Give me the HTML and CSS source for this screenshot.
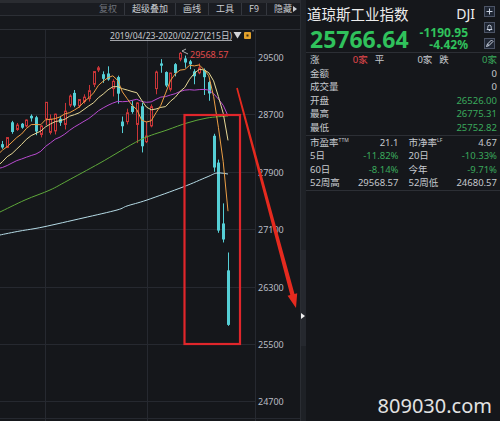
FILE: index.html
```html
<!DOCTYPE html>
<html lang="zh-CN">

<head>
    <meta charset="UTF-8" />
    <meta name="viewport" content="width=device-width, initial-scale=1.0" />
    <link rel="stylesheet" href="styles.css">
    <title>道琼斯工业指数 DJI</title>
</head>

<body>
    <div class="app">
        <section class="chart-pane">
            <div class="toolbar">
                <span class="tool dim">复权</span>
                <span class="tool">超级叠加</span>
                <span class="tool">画线</span>
                <span class="tool">工具</span>
                <span class="tool">F9</span>
                <span class="tool last">隐藏<i class="caret"></i></span>
            </div>
            <div class="subbar"></div>
            <div class="chart">
                <svg id="kline" width="300" height="391" viewBox="0 30 300 391">
                    <g id="grid" class="grid"></g>
                    <g id="axis" class="axis"></g>
                    <g class="range">
                        <text x="110" y="38.5" textLength="122" lengthAdjust="spacingAndGlyphs">2019/04/23-2020/02/27(215日)</text>
                        <line x1="110" y1="40.5" x2="232" y2="40.5" />
                        <polygon points="233.5,32 241.5,32 237.5,38.5" />
                        <rect class="lock" x="244" y="32" width="7" height="7" rx="1" />
                        <rect class="lock-hole" x="246.5" y="34.5" width="2" height="2" />
                        <path class="lock-tag" d="M251 29.5 h2 v2" />
                    </g>
                    <g id="candles"></g>
                    <g id="lines"></g>
                    <g class="peak">
                        <path d="M182 51 l4 -2 M182 51 l6 3" />
                        <text x="190" y="57.5">29568.57</text>
                    </g>
                    <rect class="mark-box" x="184.5" y="115" width="55.5" height="229" />
                    <polygon class="mark-arrow" points="237.8,87.8 294.5,293.9 297.2,293.2 296,308 287.6,295.8 290.3,295.1 236.2,88.2" />
                </svg>
            </div>
        </section>

        <div class="splitter">
            <div class="thumb"><i class="grip"></i></div>
        </div>

        <aside class="quote">
            <div class="qhead">
                <div class="name-block">
                    <div class="title">道琼斯工业指数</div>
                    <div class="price">25766.64</div>
                </div>
                <div class="code-block">
                    <div class="dji">DJI</div>
                    <div class="chg first">-1190.95</div>
                    <div class="chg">-4.42%</div>
                </div>
                <div class="tools">
                    <span class="tbtn">
                        <svg width="9" height="9" viewBox="0 0 9 9"><path d="M4.5 1.5v6M1.5 4.5h6" /></svg>
                    </span>
                    <span class="tbtn">
                        <svg width="9" height="9" viewBox="0 0 9 9"><path d="M2 6.5c0.8-0.8 0.8-1.6 0.8-2.6a1.7 1.7 0 0 1 3.4 0c0 1 0 1.8 0.8 2.6zM3.8 7.5h1.4" /></svg>
                    </span>
                    <span class="tbtn">
                        <svg width="9" height="9" viewBox="0 0 9 9"><path d="M1.5 7.5l1-2.5 4-4 1.5 1.5-4 4zM2.5 5l1.5 1.5" /></svg>
                    </span>
                </div>
            </div>

            <div class="stats">
                <div class="row three">
                    <div class="cell"><span>涨</span><span class="red">0家</span></div>
                    <div class="cell"><span>平</span><span>0家</span></div>
                    <div class="cell"><span>跌</span><span class="green">0家</span></div>
                </div>
                <div class="row"><div class="cell"><span>金额</span><span>0</span></div></div>
                <div class="row"><div class="cell"><span>成交量</span><span>0</span></div></div>
                <div class="row"><div class="cell"><span>开盘</span><span class="green">26526.00</span></div></div>
                <div class="row"><div class="cell"><span>最高</span><span class="green">26775.31</span></div></div>
                <div class="row"><div class="cell"><span>最低</span><span class="green">25752.82</span></div></div>
            </div>

            <div class="stats">
                <div class="row two">
                    <div class="cell"><span>市盈率<sup>TTM</sup></span><span>21.1</span></div>
                    <div class="cell"><span>市净率<sup>LF</sup></span><span>4.67</span></div>
                </div>
                <div class="row two">
                    <div class="cell"><span>5日</span><span class="green">-11.82%</span></div>
                    <div class="cell"><span>20日</span><span class="green">-10.33%</span></div>
                </div>
                <div class="row two">
                    <div class="cell"><span>60日</span><span class="green">-8.14%</span></div>
                    <div class="cell"><span>今年</span><span class="green">-9.71%</span></div>
                </div>
                <div class="row two">
                    <div class="cell"><span>52周高</span><span>29568.57</span></div>
                    <div class="cell"><span>52周低</span><span>24680.57</span></div>
                </div>
            </div>
        </aside>
    </div>

    <div class="watermark">809030.com</div>

    <script>
        var NS = "http://www.w3.org/2000/svg";

        // closes 2019/11/19 - 2019/12/17, only used for the moving averages
        var prior = [27934, 27821, 27766, 27876, 28066, 28121, 28164, 28051, 27783, 27502,
            27649, 27677, 28015, 27909, 27881, 27911, 28132, 28135, 28235, 28267];

        // open, high, low, close  2019/12/18 - 2020/02/27
        var bars = [
            [28285, 28330, 28220, 28239], [28240, 28380, 28230, 28377], [28590, 28610, 28430, 28455],
            [28490, 28580, 28470, 28551], [28570, 28580, 28500, 28515], [28540, 28630, 28520, 28621],
            [28680, 28700, 28600, 28645], [28660, 28680, 28410, 28462], [28420, 28550, 28380, 28538],
            [28640, 28872, 28550, 28868], [28450, 28700, 28420, 28634], [28470, 28710, 28420, 28703],
            [28640, 28680, 28540, 28583], [28560, 28860, 28490, 28745], [28830, 28980, 28800, 28956],
            [29000, 29040, 28800, 28823], [28820, 28910, 28790, 28907], [28880, 28980, 28850, 28940],
            [28920, 29110, 28880, 29030], [29120, 29300, 29080, 29297], [29320, 29374, 29290, 29348],
            [29260, 29300, 29140, 29196], [29270, 29370, 29170, 29186], [29060, 29190, 28950, 29160],
            [29220, 29240, 28850, 28989], [28600, 28670, 28440, 28535], [28600, 28780, 28560, 28722],
            [28820, 28890, 28710, 28734], [28560, 28870, 28300, 28859], [28813, 28860, 28170, 28256],
            [28320, 28600, 28300, 28399], [28540, 28840, 28520, 28807], [29060, 29310, 28980, 29290],
            [29410, 29470, 29280, 29379], [29290, 29300, 29080, 29102], [29050, 29280, 29020, 29276],
            [29400, 29415, 29230, 29276], [29470, 29568.57, 29440, 29551], [29480, 29520, 29350, 29423],
            [29440, 29460, 29330, 29398], [29300, 29330, 29120, 29232], [29280, 29410, 29260, 29348],
            [29320, 29340, 28970, 29219], [29150, 29170, 28890, 28992], [28402, 28430, 27900, 27960],
            [28028, 28070, 27050, 27081], [27180, 27460, 26915, 26957], [26526, 26775.31, 25752.82, 25766.64]
        ];

        // slow averages, read off the terminal
        var ma60 = [[0, 212], [25, 200], [50, 190], [67, 181], [100, 163], [140, 140], [167, 130], [187, 123], [207, 118], [228, 116]];
        var ma120 = [[0, 235], [20, 231], [43, 227], [83, 218], [117, 210], [127, 206], [147, 200], [183, 187], [207, 177], [217, 173], [228, 174]];

        function py(p) {
            return 57 + (29500 - p) * 57.4 / 800;
        }

        function px(i) {
            return 2.4 + i * 4.8;
        }

        function add(tag, attrs, parent) {
            var el = document.createElementNS(NS, tag);
            for (var k in attrs) el.setAttribute(k, attrs[k]);
            parent.appendChild(el);
            return el;
        }

        var grid = document.getElementById("grid");
        var axis = document.getElementById("axis");
        for (let p = 29500; p >= 24700; p -= 800) {
            var gy = Math.round(py(p)) + 0.5;
            add("line", { x1: 0, y1: gy, x2: 255, y2: gy }, grid);
            add("text", { x: 258, y: gy + 3.5 }, axis).textContent = p;
        }
        [45.5, 147.5, 255.5].forEach(function(gx) {
            add("line", { x1: gx, y1: 30, x2: gx, y2: 421 }, grid);
        });
        add("line", { x1: 0, y1: 418.5, x2: 300, y2: 418.5 }, grid);

        var candles = document.getElementById("candles");
        for (let i = 0; i < bars.length; i++) {
            let o = bars[i][0], h = bars[i][1], l = bars[i][2], c = bars[i][3];
            let cx = Math.round(px(i)) + 0.5;
            let bodyTop = py(Math.max(o, c));
            let bodyBot = py(Math.min(o, c));
            if (bodyBot - bodyTop < 1) bodyBot = bodyTop + 1;
            if (c >= o) {
                add("line", { x1: cx, y1: py(h), x2: cx, y2: bodyTop, class: "up" }, candles);
                add("line", { x1: cx, y1: bodyBot, x2: cx, y2: py(l), class: "up" }, candles);
                add("rect", { x: cx - 1, y: bodyTop, width: 2, height: bodyBot - bodyTop, class: "up" }, candles);
            } else {
                add("line", { x1: cx, y1: py(h), x2: cx, y2: py(l), class: "down" }, candles);
                add("rect", { x: cx - 1.5, y: bodyTop, width: 3, height: bodyBot - bodyTop, class: "down-body" }, candles);
            }
        }

        var lines = document.getElementById("lines");
        var closes = prior.concat(bars.map(function(b) { return b[3]; }));

        function movingAverage(n, cls) {
            var pts = [];
            for (let i = -1; i < bars.length; i++) {
                let k = i + prior.length;
                if (k - n + 1 < 0) continue;
                let s = 0;
                for (let j = k - n + 1; j <= k; j++) s += closes[j];
                pts.push(px(i).toFixed(1) + "," + py(s / n).toFixed(1));
            }
            add("polyline", { points: pts.join(" "), class: cls }, lines);
        }

        // catmull-rom through the read points
        function smooth(pts, cls) {
            var d = "M" + pts[0][0] + " " + pts[0][1];
            for (let i = 0; i < pts.length - 1; i++) {
                let a = pts[i - 1] || pts[i], b = pts[i], c = pts[i + 1], e = pts[i + 2] || c;
                d += " C" + (b[0] + (c[0] - a[0]) / 6).toFixed(1) + " " + (b[1] + (c[1] - a[1]) / 6).toFixed(1) +
                    " " + (c[0] - (e[0] - b[0]) / 6).toFixed(1) + " " + (c[1] - (e[1] - b[1]) / 6).toFixed(1) +
                    " " + c[0] + " " + c[1];
            }
            add("path", { d: d, class: cls }, lines);
        }

        smooth(ma120, "ma ma120");
        smooth(ma60, "ma ma60");
        movingAverage(20, "ma ma20");
        movingAverage(10, "ma ma10");
        movingAverage(5, "ma ma5");
    </script>
</body>

</html>
```

FILE: styles.css
```css
* {
    margin: 0;
    padding: 0;
    box-sizing: border-box;
}

body {
    width: 500px;
    height: 421px;
    overflow: hidden;
    position: relative;
    background-color: #15171b;
    color: #c8cbd0;
    font-family: "Noto Sans", "Noto Sans CJK SC", sans-serif;
}

.app {
    display: flex;
    height: 421px;
}

/* left: k-line chart */

.chart-pane {
    width: 300px;
    display: flex;
    flex-direction: column;
}

.toolbar {
    height: 16px;
    display: flex;
    justify-content: flex-end;
    border-top: 3px solid #2a2c31;
    border-bottom: 1px solid #2c2f35;
    background-color: #1a1c21;
    font-family: "Noto Sans CJK SC", sans-serif;
    font-size: 9px;
    line-height: 12px;
    color: #c9ccd1;
}

.tool {
    padding: 0 7px;
    border-left: 1px solid #34373e;
}

.tool.dim {
    color: #6f737b;
    border-left: none;
}

.tool.last {
    padding-right: 3px;
}

.caret {
    display: inline-block;
    margin-left: 1px;
    border-left: 4px solid #c9ccd1;
    border-top: 3px solid transparent;
    border-bottom: 3px solid transparent;
}

.subbar {
    height: 14px;
    border-bottom: 1px solid #2c2f35;
    background-color: #16181c;
}

.chart {
    flex: 1;
}

.chart svg {
    display: block;
}

.grid line {
    stroke: #262930;
    stroke-width: 1;
}

.axis text {
    font-family: "Noto Sans", sans-serif;
    font-size: 9px;
    fill: #b9bcc3;
}

.range text {
    font-family: "Noto Sans", "Noto Sans CJK SC", sans-serif;
    font-size: 9.5px;
    fill: #c6c9ce;
}

.range line {
    stroke: #c6c9ce;
    stroke-width: 0.8;
}

.range polygon {
    fill: #d2d4d8;
}

.range .lock {
    fill: #e2a12b;
}

.range .lock-hole {
    fill: #3a2a10;
}

.range .lock-tag {
    fill: none;
    stroke: #d8d8d8;
    stroke-width: 0.8;
}

.up {
    fill: none;
    stroke: #c93538;
    stroke-width: 1;
}

.down {
    stroke: #55cfd6;
    stroke-width: 1;
}

.down-body {
    fill: #55cfd6;
}

.ma {
    fill: none;
    stroke-width: 1;
}

.ma5 {
    stroke: #ee9f45;
}

.ma10 {
    stroke: #e7d896;
}

.ma20 {
    stroke: #b84bd0;
}

.ma60 {
    stroke: #5ea83a;
}

.ma120 {
    stroke: #b5dbe6;
}

.peak path {
    fill: none;
    stroke: #d8d8d8;
    stroke-width: 0.8;
}

.peak text {
    font-family: "Noto Sans", sans-serif;
    font-size: 9px;
    fill: #e24a4a;
}

.mark-box {
    fill: none;
    stroke: #e0262b;
    stroke-width: 2.2;
}

.mark-arrow {
    fill: #e52a1f;
}

/* splitter between chart and quote */

.splitter {
    width: 6px;
    background-color: #1e2126;
    border-left: 1px solid #2a2d33;
}

.thumb {
    margin-top: 250px;
    height: 96px;
    padding-top: 63px;
    background-color: #25282e;
}

.grip {
    display: block;
    width: 0;
    border-left: 4px solid #f0f0f0;
    border-top: 3px solid transparent;
    border-bottom: 3px solid transparent;
}

/* right: quote panel */

.quote {
    flex: 1;
}

.qhead {
    height: 53px;
    display: flex;
    padding: 0 3px 0 4px;
    border-bottom: 1px solid #2c2f35;
}

.title {
    margin-top: 6px;
    margin-left: -3px;
    font-family: "Noto Sans CJK SC", sans-serif;
    font-size: 14.5px;
    line-height: 16px;
    color: #ececec;
}

.price {
    margin-top: 5px;
    font-size: 23px;
    font-weight: bold;
    line-height: 24px;
    color: #30c25c;
}

.code-block {
    flex: 1;
    padding-top: 6px;
    text-align: right;
}

.dji {
    font-size: 14px;
    line-height: 16px;
    color: #ececec;
}

.chg {
    padding-right: 7px;
    font-size: 12px;
    font-weight: bold;
    line-height: 12px;
    color: #30c25c;
}

.chg.first {
    margin-top: 5px;
}

.tools {
    display: flex;
    flex-direction: column;
    gap: 5px;
    margin: 6px 2px 0 9px;
}

.tbtn {
    width: 11px;
    height: 11px;
    display: flex;
    align-items: center;
    justify-content: center;
    border: 1px solid #4c5466;
    background-color: #1f2633;
}

.tbtn svg path {
    fill: none;
    stroke: #c8d0de;
    stroke-width: 1;
}

.stats {
    padding: 0 3px 0 4px;
    border-bottom: 1px solid #2c2f35;
}

.row {
    display: grid;
    grid-template-columns: 1fr;
    height: 13.6px;
    font-size: 9.5px;
    line-height: 13.6px;
    color: #c6c9ce;
}

.row.three {
    grid-template-columns: 1fr 1fr 1fr;
    column-gap: 7px;
}

.row.two {
    grid-template-columns: 1fr 1fr;
    column-gap: 10px;
}

.cell {
    display: flex;
    justify-content: space-between;
}

.cell sup {
    font-size: 5px;
    line-height: 0;
    vertical-align: 4px;
}

.red {
    color: #e5484d;
}

.green {
    color: #3aa95b;
}

.watermark {
    position: absolute;
    right: 8px;
    bottom: 5px;
    font-family: "Noto Sans", sans-serif;
    font-size: 20px;
    line-height: 20px;
    color: #e2e2e2;
}
```
